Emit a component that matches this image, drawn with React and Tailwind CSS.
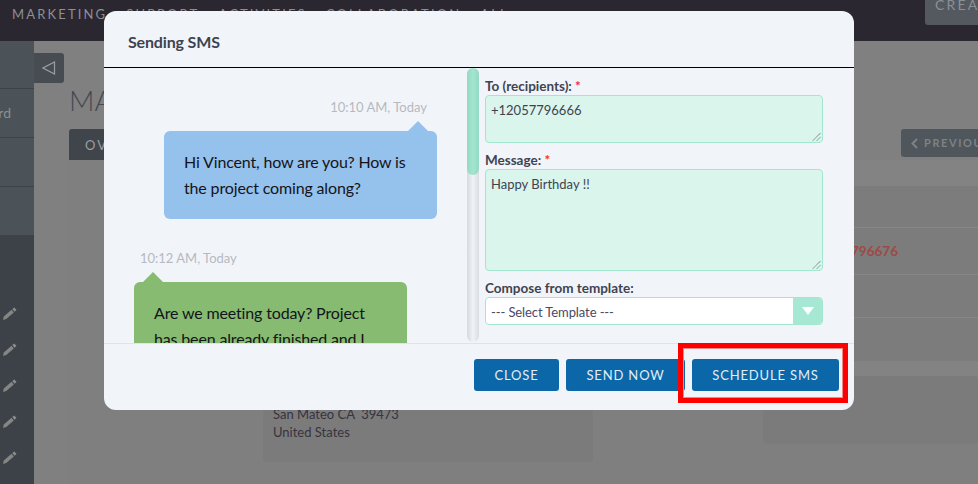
const Pencil = () => (
  <svg width="15" height="15" viewBox="0 0 15 15" className="block">
    <path d="M1 14l.8-3.500 7.700-6.700 2.300 2.600L4.200 13z" fill="#858585" />
    <path d="M10.300 3.100l2-1.700 2.200 2.500-2 1.800z" fill="#8d8d8d" />
  </svg>
);

const Background = () => (
  <div className="h-[484px] w-[978px] overflow-hidden bg-[#808080] flex flex-col">
    <div className="h-[41px] shrink-0 bg-[#2a2730] flex items-start justify-between">
      <div className="flex gap-[19px] pl-[12px] pt-[5px] text-[13px] leading-[18px] tracking-[2.15px] text-[#8d8f95]">
        <span>MARKETING</span>
        <span>SUPPORT</span>
        <span>ACTIVITIES</span>
        <span>COLLABORATION</span>
        <span>ALL</span>
      </div>
      <div className="w-[53px] h-[25px] bg-[#53595f] rounded-bl-[3px] pl-[10px] text-[14px] leading-[10px] tracking-[2.2px] text-[#8a9096] overflow-hidden whitespace-nowrap">CREATE</div>
    </div>

    <div className="flex flex-1 min-h-0">
      <div className="w-[34px] shrink-0 bg-[#3c4248] flex flex-col">
        <div className="h-[48px] bg-[#4b5258] border-b border-[#3c4248]" />
        <div className="h-[49px] bg-[#4b5258] border-b border-[#3c4248] text-[14px] text-[#8a8f94] flex items-center justify-end"><span className="mr-[23px] leading-none">rd</span></div>
        <div className="h-[49px] bg-[#4b5258] border-b border-[#3c4248]" />
        <div className="h-[49px] bg-[#4b5258] border-b border-[#3c4248]" />
        <div className="mt-[70px] pl-[2px] flex flex-col gap-[21px]">
          <Pencil />
          <Pencil />
          <Pencil />
          <Pencil />
          <Pencil />
        </div>
      </div>

      <div className="flex-1 min-w-0 flex flex-col">
        <div className="h-[30px] w-[30px] mt-[12px] bg-[#464c52] rounded-r-[3px] flex items-center justify-center">
          <svg width="14" height="14" viewBox="0 0 14 14"><path d="M12.500 1v12L1 7z" fill="none" stroke="#9a9ea2" strokeWidth="1.2" /></svg>
        </div>
        <div className="pl-[35px] text-[28px] leading-[34px] font-light text-[#454a52]">MA</div>
        <div className="flex items-start justify-between pl-[35px] mt-[12px]">
          <div className="w-[60px] h-[32px] bg-[#3f454b] rounded-t-[3px] pl-[16px] text-[13px] leading-[32px] tracking-[2px] text-[#9a9ea2] overflow-hidden whitespace-nowrap">OVERVIEW</div>
          <div className="w-[77px] h-[28px] bg-[#4f565c] rounded-l-[3px] pl-[10px] flex items-center gap-[6px] text-[11px] font-bold tracking-[1.6px] text-[#7d8287] overflow-hidden whitespace-nowrap">
            <svg width="7" height="11" viewBox="0 0 7 11" className="shrink-0"><path d="M6 1L1.500 5.500 6 10" fill="none" stroke="#7d8287" strokeWidth="2" /></svg>
            PREVIOUS
          </div>
        </div>

        <div className="flex-1 ml-[35px] mt-[-1px] bg-[#7f7f7f] flex justify-between min-h-0">
          <div className="ml-[194px] mt-[220px] w-[330px] h-[82px] bg-[#7b7b7b] rounded-[3px] pl-[10px] pt-[25px] text-[13px] leading-[18px] text-[#37333f]">
            <div>San Mateo CA &nbsp;39473</div>
            <div>United States</div>
          </div>

          <div className="w-[215px] flex flex-col bg-[#838383]">
            <div className="h-[26px]" />
            <div className="bg-[#7c7c7c]">
              <div className="h-[42px] border-b border-[#868686]" />
              <div className="h-[47px] border-b border-[#868686] flex items-center justify-end pr-[80px] text-[13.500px] font-bold text-[#9c4a46]">+12057796676</div>
              <div className="h-[43px] border-b border-[#868686]" />
              <div className="h-[43px]" />
            </div>
            <div className="h-[15px]" />
            <div className="h-[68px] bg-[#7b7b7b] rounded-[3px]" />
            <div className="flex-1 bg-[#7f7f7f]" />
          </div>
        </div>
      </div>
    </div>
  </div>
);

const Bubble = ({ tone, arrow, children }) => (
  <div className={`relative w-[273px] rounded-[6px] px-[20px] py-[18px] text-[16px] leading-[26px] tracking-[-0.15px] text-[#14141a] ${tone}`}>
    {arrow}
    {children}
  </div>
);

function Grip() {
  return (
    <svg width="9" height="9" viewBox="0 0 9 9" className="absolute right-[1px] bottom-[1px]">
      <path d="M1 8.500L8.500 1M5 8.500L8.500 5" stroke="#333" strokeWidth="0.8" strokeDasharray="1 0.6" />
    </svg>
  );
}

function FooterButton({ width, children }) {
  return (
    <div className={`${width} h-[32px] rounded-[3px] bg-[#0b67a8] text-center text-[13px] leading-[32px] tracking-[0.85px] text-[#e3edf5]`}>
      {children}
    </div>
  );
}

export default function App() {
  return (
    <div className="relative font-['Lato','Liberation_Sans',sans-serif]">
      <Background />

      <div className="absolute left-[104px] top-[11px] w-[750px] h-[399px] bg-[#f1f5f9] rounded-[12px] flex flex-col overflow-hidden text-[#3f4350]">
        <div className="h-[57px] shrink-0 border-b border-black pl-[24px] pt-[20px] text-[16px] leading-[22px] font-bold tracking-[-0.15px]">Sending SMS</div>

        <div className="h-[275px] shrink-0 flex overflow-hidden">
          <div className="w-[363px] shrink-0 overflow-hidden">
            <div className="flex flex-col items-end pr-[30px] pt-[29px]">
              <div className="text-[13px] leading-[20px] text-[#b6b9c0] pr-[10px]">10:10 AM, Today</div>
              <div className="mt-[14px]">
                <Bubble
                  tone="bg-[#95c1ed]"
                  arrow={<div className="absolute right-[9px] top-[-10px] w-0 h-0 border-x-[10px] border-x-transparent border-b-[10px] border-b-[#95c1ed]" />}
                >
                  Hi Vincent, how are you? How is the project coming along?
                </Bubble>
              </div>
            </div>
            <div className="flex flex-col items-start pl-[30px] mt-[29px]">
              <div className="pl-[6px] text-[13px] leading-[20px] text-[#b6b9c0]">10:12 AM, Today</div>
              <div className="mt-[14px]">
                <Bubble
                  tone="bg-[#86bb71]"
                  arrow={<div className="absolute left-[9px] top-[-10px] w-0 h-0 border-x-[10px] border-x-transparent border-b-[10px] border-b-[#86bb71]" />}
                >
                  Are we meeting today? Project has been already finished and I
                </Bubble>
              </div>
            </div>
          </div>

          <div className="w-[12px] shrink-0 h-[274px] rounded-full bg-gradient-to-r from-[#d5dadf] via-[#f1f3f5] to-[#d9dde1]">
            <div className="h-[107px] w-[12px] rounded-full bg-gradient-to-r from-[#93d9c3] via-[#a3e6d0] to-[#93d9c3]" />
          </div>

          <div className="w-[338px] ml-[6px] shrink-0 pt-[10px]">
            <div className="text-[13.500px] leading-[16px] font-bold">To (recipients): <span className="text-[#ff2a2a]">*</span></div>
            <div className="relative mt-[1px] h-[48px] border border-[#a3e6d0] rounded-[4px] bg-[#d9f5ec] px-[5px] pt-[5px] text-[13px] leading-[18px]">
              +12057796666
              <Grip />
            </div>
            <div className="mt-[9px] text-[13.500px] leading-[16px] font-bold">Message: <span className="text-[#ff2a2a]">*</span></div>
            <div className="relative mt-[1px] h-[102px] border border-[#a3e6d0] rounded-[4px] bg-[#d9f5ec] px-[5px] pt-[5px] text-[13px] leading-[18px]">
              Happy Birthday !!
              <Grip />
            </div>
            <div className="mt-[9px] text-[13.500px] leading-[16px] font-bold">Compose from template:</div>
            <div className="mt-[1px] h-[28px] border border-[#a3e6d0] rounded-[4px] bg-white flex overflow-hidden">
              <div className="flex-1 pl-[5px] text-[13px] leading-[28px] tracking-[-0.1px] text-[#4a4a63]">--- Select Template ---</div>
              <div className="w-[29px] bg-[#a6e8d3] flex items-center justify-center">
                <div className="w-0 h-0 border-x-[6.500px] border-x-transparent border-t-[8px] border-t-white" />
              </div>
            </div>
          </div>
        </div>

        <div className="flex-1 border-t border-[#dfe3e8] flex justify-end items-start gap-[7px] pt-[15px] pr-[15px]">
          <FooterButton width="w-[85px]">CLOSE</FooterButton>
          <FooterButton width="w-[119px]">SEND NOW</FooterButton>
          <FooterButton width="w-[147px]">SCHEDULE SMS</FooterButton>
        </div>
      </div>

      {/* red annotation drawn on the screenshot */}
      <div className="absolute left-[678px] top-[343px] w-[170px] h-[60px] border-[5px] border-[#ff0000] shadow-[inset_0_0_0_1px_#f08a8a]" />
    </div>
  );
}
